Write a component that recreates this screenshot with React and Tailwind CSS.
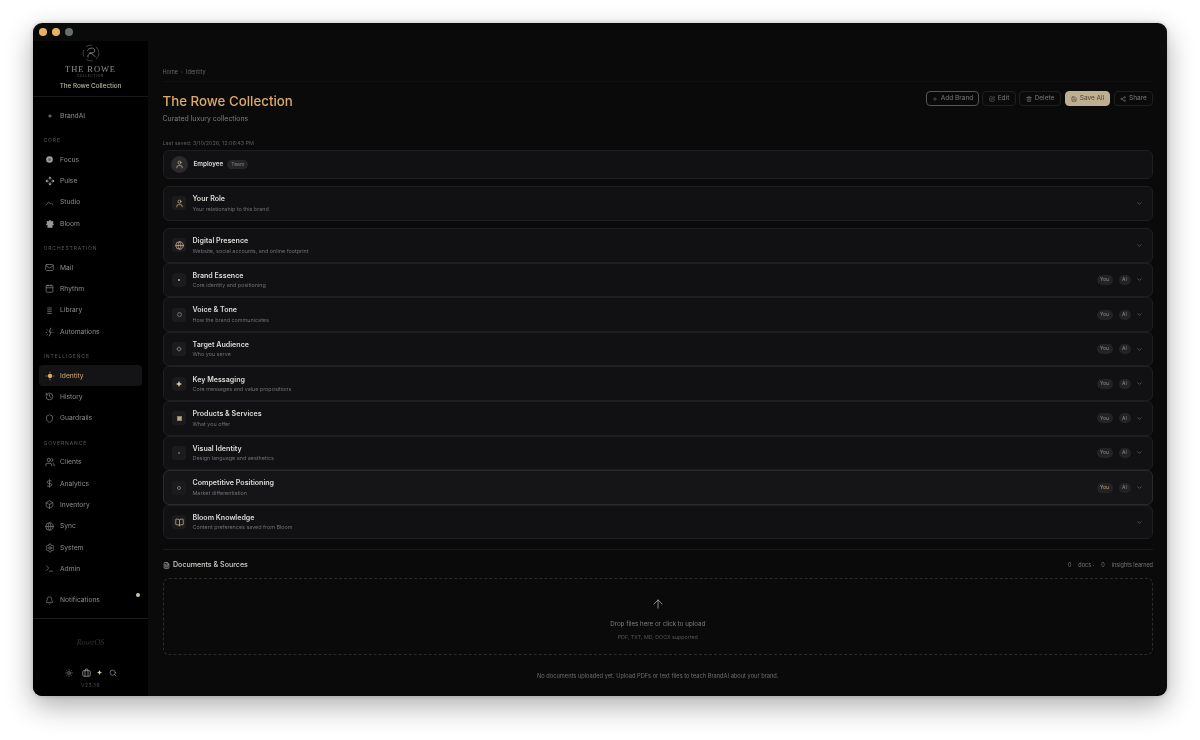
import { BookOpen, Bell, Calendar, ChevronDown, DollarSign, FileText, Globe, History, Mail, Plus, Save, Search, Settings, Share2, Shield, Sparkle, SquarePen, Sun, Terminal, Trash2, ArrowUp, User, Users, Box } from 'lucide-react';

const FocusIcon = () => (
  <svg width="9" height="9" viewBox="0 0 12 12">
    <circle cx="6" cy="6" r="4.4" fill="#a0a0a0" />
    <circle cx="6" cy="6" r="2" fill="#6a6a6a" />
  </svg>
);
const PulseIcon = () => (
  <svg width="10" height="10" viewBox="0 0 12 12" fill="none" stroke="#a0a0a0" strokeWidth="1.2">
    <path d="M6 1l1.3 1.5L6 4 4.7 2.5zM6 8l1.3 1.5L6 11 4.7 9.5zM1 6l1.5-1.3L4 6 2.5 7.3zM8 6l1.5-1.3L11 6 9.5 7.3z" />
  </svg>
);
const StudioIcon = () => (
  <svg width="9" height="9" viewBox="0 0 12 12" fill="none" stroke="#666" strokeWidth="1">
    <path d="M1 10l4-5 2 3 1.500-1.500L11 10" />
  </svg>
);
const BloomIcon = () => (
  <svg width="10" height="10" viewBox="0 0 12 12" fill="#999">
    <path d="M6 1l1.600 1.800 2.400-.3-.3 2.500L11 6.500 9 7.500V10.500H3V7.500L1 6.500 2.300 5 2 2.500l2.400.3z" />
  </svg>
);
const LinesIcon = () => (
  <svg width="9" height="9" viewBox="0 0 12 12" stroke="#666" strokeWidth="1.200">
    <path d="M3 2.500h6M3 5h6M3 7.500h6M3 10h6" />
  </svg>
);
const AutomationIcon = () => (
  <svg width="10" height="10" viewBox="0 0 12 12" fill="none" stroke="#858585" strokeWidth="1">
    <path d="M7 1L5 6h2.500L5 11M2 3l1.200 1M1 6.500h1.500M2 9.500L3.200 8.500M9.500 3L8.500 4M10 6.500H9" />
  </svg>
);
const IdentityIcon = () => (
  <svg width="10" height="10" viewBox="0 0 12 12">
    <circle cx="6" cy="6" r="2.600" fill="#e2ab62" />
    <path d="M6 .8v2M6 9.200v2M.8 6h2M9.200 6h2" stroke="#a98457" strokeWidth="1" />
  </svg>
);
const CaseIcon = () => (
  <svg width="9" height="9" viewBox="0 0 12 12" fill="none" stroke="#a0a0a0" strokeWidth="1">
    <rect x="1" y="3.500" width="10" height="7.500" rx="1.500" />
    <path d="M4 3.500V11M8 3.500V11M4.500 3.500V1.500h3v2" />
  </svg>
);
const Diamond = ({ size = 7, color = '#d8c7a8' }) => (
  <svg width={size} height={size} viewBox="0 0 10 10">
    <path d="M5 0l1.600 3.400L10 5 6.600 6.600 5 10 3.400 6.600 0 5l3.400-1.600z" fill={color} />
  </svg>
);

const ic = '#7c7c7c';
const nav = [
  { items: [{ label: 'BrandAI', icon: <Sparkle size={4} fill="#999" stroke="#999" /> }] },
  {
    title: 'CORE',
    items: [
      { label: 'Focus', icon: <FocusIcon /> },
      { label: 'Pulse', icon: <PulseIcon /> },
      { label: 'Studio', icon: <StudioIcon /> },
      { label: 'Bloom', icon: <BloomIcon /> },
    ],
  },
  {
    title: 'ORCHESTRATION',
    items: [
      { label: 'Mail', icon: <Mail size={9} color={ic} /> },
      { label: 'Rhythm', icon: <Calendar size={9} color={ic} /> },
      { label: 'Library', icon: <LinesIcon /> },
      { label: 'Automations', icon: <AutomationIcon /> },
    ],
  },
  {
    title: 'INTELLIGENCE',
    items: [
      { label: 'Identity', icon: <IdentityIcon />, active: true },
      { label: 'History', icon: <History size={9} color={ic} /> },
      { label: 'Guardrails', icon: <Shield size={9} color={ic} /> },
    ],
  },
  {
    title: 'GOVERNANCE',
    items: [
      { label: 'Clients', icon: <Users size={10} color={ic} /> },
      { label: 'Analytics', icon: <DollarSign size={9} color={ic} /> },
      { label: 'Inventory', icon: <Box size={9} color={ic} /> },
      { label: 'Sync', icon: <Globe size={9} color={ic} /> },
      { label: 'System', icon: <Settings size={10} color={ic} /> },
      { label: 'Admin', icon: <Terminal size={9} color={ic} /> },
    ],
  },
];

const gold = '#c9b48f';
const sections = [
  { title: 'Digital Presence', sub: 'Website, social accounts, and online footprint', icon: <Globe size={9} color={gold} />, plain: true },
  { title: 'Brand Essence', sub: 'Core identity and positioning', icon: <span className="w-[2px] h-[2px] rounded-full bg-[#c9b48f]" /> },
  { title: 'Voice & Tone', sub: 'How the brand communicates', icon: <span className="w-[5px] h-[5px] rounded-full border border-[#77726a]" /> },
  { title: 'Target Audience', sub: 'Who you serve', icon: <span className="w-[4px] h-[4px] rotate-45 border border-[#77726a]" /> },
  { title: 'Key Messaging', sub: 'Core messages and value propositions', icon: <Diamond size={6} color="#d8c7a8" /> },
  { title: 'Products & Services', sub: 'What you offer', icon: <span className="w-[5px] h-[5px] bg-[#bba888] border border-[#8d7f68]" /> },
  { title: 'Visual Identity', sub: 'Design language and aesthetics', icon: <span className="w-[2px] h-[2px] rounded-full bg-[#77726a]" /> },
  { title: 'Competitive Positioning', sub: 'Market differentiation', icon: <span className="w-[4px] h-[4px] rounded-full border border-[#77726a]" />, hover: true },
  { title: 'Bloom Knowledge', sub: 'Content preferences saved from Bloom', icon: <BookOpen size={9} color={gold} />, plain: true },
];

const Row = ({ title, sub, icon, plain, hover, className = '' }) => (
  <div className={`flex items-center pl-[8.500px] pr-[9px] h-[34.600px] rounded-[6px] border ${hover ? 'bg-[#151517] border-[#2a2a2c]' : 'bg-[#111113] border-[#1f1f21]'} ${className}`}>
    <div className="w-[14px] h-[14px] rounded-[3px] bg-[#1b1b1d] flex items-center justify-center">{icon}</div>
    <div className="ml-[6.500px]">
      <div className="text-[7.100px] leading-[10px] font-semibold text-[#dedcd8]">{title}</div>
      <div className="text-[5.400px] leading-[8px] mt-[0.500px] text-[#6f6f70]">{sub}</div>
    </div>
    <div className="ml-auto flex items-center">
      {!plain && (
        <>
          <span className={`h-[10px] w-[16px] rounded-full bg-[#232325] flex items-center justify-center text-[5px] ${hover ? 'text-[#c0a478]' : 'text-[#8a8a8a]'}`}>You</span>
          <span className="ml-[6px] h-[10px] w-[12px] rounded-full bg-[#232325] flex items-center justify-center text-[5px] text-[#8a8a8a]">AI</span>
        </>
      )}
      <ChevronDown size={7} color="#777" className="ml-[5px] mr-[0.500px]" />
    </div>
  </div>
);

const Btn = ({ icon, children, className = '' }) => (
  <button className={`h-[15px] flex items-center justify-center gap-[3px] rounded-[4px] text-[6.500px] leading-[15px] border ${className}`}>
    {icon}
    {children}
  </button>
);

export default function App() {
  return (
    <div className="w-[1200px] h-[740px] bg-white overflow-hidden pt-[23px] pl-[33px] font-['Inter',sans-serif]">
      <div className="relative w-[1134px] h-[673px] rounded-[9px] overflow-hidden bg-[#0a0a0a] flex will-change-transform shadow-[0_10px_28px_rgba(0,0,0,0.32),0_0_5px_rgba(0,0,0,0.18)]">
        <div className="absolute top-[5px] left-[6px] flex gap-[5px]">
          <span className="w-[8px] h-[8px] rounded-full bg-[#e9b15f]" />
          <span className="w-[8px] h-[8px] rounded-full bg-[#e9b15f]" />
          <span className="w-[8px] h-[8px] rounded-full bg-[#66706c]" />
        </div>

        <aside className="w-[115px] shrink-0 mt-[18px] bg-black flex flex-col">
          <div className="shrink-0 pt-[3px] h-[56px] border-b border-[#1a1a1a] flex flex-col items-center">
            <svg width="18" height="18" viewBox="0 0 24 24" fill="none" stroke="#9a9a9a" strokeWidth="1">
              <circle cx="12" cy="12" r="10.500" strokeDasharray="9 5" stroke="#555" />
              <path d="M7 9c2-4 9-5 10-1s-5 4-7 4c4 0 5 3 8 5M12 12c-3 1-5 3-4 6" />
            </svg>
            <div className="mt-[3px] text-[8.500px] leading-[9px] tracking-[0.9px] text-[#8d8d8d] font-['Liberation_Serif',serif]">THE ROWE</div>
            <div className="text-[3px] leading-[5px] tracking-[0.8px] text-[#666]">COLLECTION</div>
            <div className="mt-[1.500px] text-[6.300px] leading-[10px] font-medium text-[#bdb4a3]">The Rowe Collection</div>
          </div>

          <nav className="shrink-0 pt-[8px] px-[6px]">
            {nav.map((group, i) => (
              <div key={i} className={group.title ? 'mt-[6.670px]' : ''}>
                {group.title && (
                  <div className="pl-[4.500px] h-[16px] flex items-center text-[5px] tracking-[0.9px] text-[#5a5a5a]">{group.title}</div>
                )}
                {group.items.map((item) => (
                  <div key={item.label} className={`h-[21.330px] flex items-center rounded-[4px] ${item.active ? 'bg-[#141416] text-[#d4ad74]' : 'text-[#8e8e8e]'}`}>
                    <span className="w-[21px] flex justify-center items-center">{item.icon}</span>
                    <span className="text-[6.700px]">{item.label}</span>
                  </div>
                ))}
              </div>
            ))}
            <div className="relative mt-[10px] h-[21.330px] flex items-center text-[#8e8e8e]">
              <span className="w-[21px] flex justify-center items-center"><Bell size={9} color="#777" /></span>
              <span className="text-[6.700px]">Notifications</span>
              <span className="absolute right-[2px] top-[3px] w-[4px] h-[4px] rounded-full bg-[#d6c4a0]" />
            </div>
          </nav>

          <div className="shrink-0 mt-[7.500px] border-t border-[#1a1a1a] flex flex-col items-center">
            <div className="mt-[18px] h-[12px] flex items-center text-[8px] italic text-[#333] font-['Liberation_Serif',serif]">RoweOS</div>
            <div className="mt-[19px] flex items-center">
              <Sun size={8} color="#8a8a8a" />
              <span className="ml-[9px] flex"><CaseIcon /></span>
              <span className="ml-[6.500px] flex"><Diamond size={5} color="#d8c7a8" /></span>
              <Search size={8} color="#9a9a9a" className="ml-[6.500px]" />
            </div>
            <div className="mt-[5px] text-[5px] tracking-[0.6px] text-[#4a4a4a]">V23.16</div>
          </div>
        </aside>

        <main className="flex-1 mt-[18px] pl-[14.500px] pr-[14px]">
          <div className="h-[41px] pb-[5px] flex items-end gap-[3px] text-[5.500px] leading-[8px] text-[#666] border-b border-[#101010]">
            <span>Home</span>
            <span className="text-[#444]">›</span>
            <span>Identity</span>
          </div>

          <div className="flex justify-between">
            <div>
              <h1 className="mt-[7.500px] text-[13.300px] leading-[22px] font-medium text-[#dcab6a]">The Rowe Collection</h1>
              <p className="mt-[1.500px] text-[6.950px] leading-[11px] text-[#7f7f7f]">Curated luxury collections</p>
            </div>
            <div className="mt-[9px] flex text-[#7d7d7d]">
              <Btn className="w-[53px] border-[#55555a] text-[#777]" icon={<Plus size={6} />}>Add Brand</Btn>
              <Btn className="ml-[3px] w-[34px] border-[#1f1f21]" icon={<SquarePen size={6} />}>Edit</Btn>
              <Btn className="ml-[3px] w-[42px] border-[#1f1f21]" icon={<Trash2 size={6} />}>Delete</Btn>
              <Btn className="ml-[4px] w-[45px] bg-[#bfae90] border-[#bfae90] text-[#4a4436]" icon={<Save size={6} />}>Save All</Btn>
              <Btn className="ml-[4px] w-[39px] border-[#1f1f21]" icon={<Share2 size={6} />}>Share</Btn>
            </div>
          </div>

          <div className="mt-[15px] text-[5.400px] leading-[8px] text-[#5c5c5c]">Last saved: 3/10/2026, 12:06:43 PM</div>

          <div className="mt-[2.500px] h-[29.500px] flex items-center pl-[7.500px] rounded-[6px] bg-[#111113] border border-[#1f1f21]">
            <div className="w-[17px] h-[17px] rounded-full bg-[#2a2a2c] flex items-center justify-center">
              <User size={9} color={gold} />
            </div>
            <span className="ml-[5.500px] text-[6.300px] font-semibold text-[#dedcd8]">Employee</span>
            <span className="ml-[4px] h-[9px] px-[4px] rounded-full bg-[#252527] flex items-center text-[5px] text-[#7d7d7d]">Team</span>
          </div>

          <Row className="mt-[7px]" title="Your Role" sub="Your relationship to this brand" icon={<User size={9} color={gold} />} plain />

          <div className="mt-[7.500px]">
            {sections.map((s) => (
              <Row key={s.title} {...s} />
            ))}
          </div>

          <div className="mt-[10px] border-t border-[#1a1a1c]" />

          <div className="mt-[9px] h-[12px] flex items-center">
            <FileText size={7} color="#c8c8c8" />
            <span className="ml-[3.500px] text-[7.100px] font-medium text-[#d2d0cc]">Documents &amp; Sources</span>
            <div className="ml-auto flex text-[5.500px] text-[#777]">
              <span>0</span>
              <span className="ml-[7px]">docs ·</span>
              <span className="ml-[7px]">0</span>
              <span className="ml-[7px]">insights learned</span>
            </div>
          </div>

          <div className="mt-[7px] h-[77px] rounded-[6px] border border-dashed border-[#2b2b2b] flex flex-col items-center">
            <ArrowUp size={14} color="#c9c2b4" strokeWidth={1.200} className="mt-[18px]" />
            <div className="mt-[8px] text-[6.200px] leading-[9px] text-[#7f7f7f]">Drop files here or click to upload</div>
            <div className="mt-[5px] text-[5.300px] leading-[8px] text-[#555]">PDF, TXT, MD, DOCX supported</div>
          </div>

          <div className="mt-[17px] text-center text-[5.700px] leading-[8px] text-[#6f6f6f]">
            No documents uploaded yet. Upload PDFs or text files to teach BrandAI about your brand.
          </div>
        </main>
      </div>
    </div>
  );
}
